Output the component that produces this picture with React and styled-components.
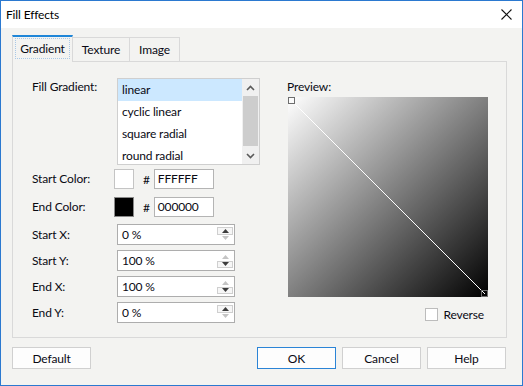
import styled, { createGlobalStyle } from 'styled-components';

const Global = createGlobalStyle`
  html, body { margin: 0; padding: 0; background: #fff; }
  * { box-sizing: border-box; }
  body { font-family: Lato, "Noto Sans", sans-serif; font-size: 12px; letter-spacing: -0.15px; color: #0a0a14; }
`;

const Window = styled.div`
  width: 523px;
  height: 386px;
  border: 1px solid #2b79d0;
  background: #f3f3f1;
  display: flex;
  flex-direction: column;
`;

const TitleBar = styled.div`
  height: 27px;
  background: #fff;
  display: flex;
  align-items: center;
  justify-content: space-between;
  padding-left: 5px;
`;

const Title = styled.span`
  font-size: 12px;
  color: #000;
`;

const CloseBtn = styled.div`
  width: 32px;
  height: 27px;
  display: flex;
  align-items: center;
  justify-content: center;
`;

const Body = styled.div`
  flex: 1;
  padding: 7px 15px 0 11px;
  display: flex;
  flex-direction: column;
`;

const Tabs = styled.div`
  display: flex;
  align-items: flex-end;
  height: 27px;
  margin-bottom: -1px;
  position: relative;
  z-index: 1;
`;

const Tab = styled.div`
  width: ${p => p.$w}px;
  height: ${p => (p.$active ? 27 : 25)}px;
  border: 1px solid #d9d9d9;
  border-left: ${p => (p.$first ? '1px solid #d9d9d9' : 'none')};
  border-top: ${p => (p.$active ? '2px solid #1f86d8' : '1px solid #d9d9d9')};
  border-bottom: ${p => (p.$active ? 'none' : '1px solid #d9d9d9')};
  background: #f3f3f1;
  display: flex;
  align-items: center;
  justify-content: center;
  padding-bottom: ${p => (p.$active ? 2 : 0)}px;
`;

const FocusText = styled.span`
  outline: 1px dotted #a9c8e6;
  outline-offset: 2px;
  padding: 0 2px;
`;

const Panel = styled.div`
  height: 277px;
  border: 1px solid #d9d9d9;
  padding: 16px 0 0 19px;
  display: flex;
  gap: 28px;
`;

const LeftCol = styled.div`
  width: 228px;
  display: flex;
  flex-direction: column;
`;

const Row = styled.div`
  display: flex;
  align-items: ${p => (p.$top ? 'flex-start' : 'center')};
  margin-top: ${p => p.$mt || 0}px;
`;

const Label = styled.div`
  width: ${p => p.$w || 85}px;
  flex-shrink: 0;
  line-height: 18px;
`;

const ListBox = styled.div`
  width: 143px;
  height: 87px;
  border: 1px solid #cfcfcf;
  background: #fff;
  display: flex;
  overflow: hidden;
`;

const Items = styled.div`
  flex: 1;
`;

const Item = styled.div`
  height: 22px;
  line-height: 22px;
  padding-left: 4px;
  background: ${p => (p.$sel ? '#cce8ff' : 'transparent')};
`;

const ScrollBar = styled.div`
  width: 17px;
  background: #f0f0f0;
  display: flex;
  flex-direction: column;
  align-items: center;
`;

const ScrollArrow = styled.div`
  height: 17px;
  width: 100%;
  display: flex;
  align-items: center;
  justify-content: center;
  margin-top: ${p => (p.$bottom ? 'auto' : '0')};
`;

const Thumb = styled.div`
  width: 15px;
  height: 50px;
  background: #cdcdcd;
`;

const Swatch = styled.div`
  width: 20px;
  height: 20px;
  border: 1px solid ${p => (p.$c === '#000' ? '#8a8a8a' : '#c4c4c4')};
  background: ${p => p.$c};
`;

const Hash = styled.span`
  margin: 0 4px 0 9px;
`;

const HexInput = styled.div`
  width: 60px;
  height: 20px;
  border: 1px solid #b4b4b4;
  background: #fff;
  padding-left: 3px;
  line-height: 18px;
`;

const Spinner = styled.div`
  width: 118px;
  height: 21px;
  border: 1px solid #adadad;
  background: #fff;
  display: flex;
  align-items: center;
  justify-content: space-between;
  padding: 0 0 0 4px;
`;

const SpinCol = styled.div`
  width: 17px;
  height: 100%;
  padding: 2px 1px 2px 0;
  display: flex;
  flex-direction: column;
`;

const SpinBtn = styled.div`
  flex: 1;
  border: 1px solid ${p => (p.$on ? '#cfcfcf' : 'transparent')};
  background: ${p => (p.$on ? '#f6f6f6' : 'transparent')};
  display: flex;
  align-items: center;
  justify-content: center;
`;

const RightCol = styled.div`
  display: flex;
  flex-direction: column;
`;

const PreviewLabel = styled.div`
  line-height: 18px;
  margin-left: -1px;
`;

const Preview = styled.div`
  position: relative;
  width: 200px;
  height: 200px;
  margin-top: 1px;
  background: linear-gradient(135deg, #ffffff 0%, #000000 100%);
`;

const Handle = styled.div`
  position: absolute;
  width: 7px;
  height: 7px;
  border: 1px solid #6e6e6e;
  background: transparent;
  ${p => (p.$end ? 'right: 0; bottom: 0;' : 'left: 0; top: 0;')}
`;

const CheckRow = styled.div`
  display: flex;
  align-items: center;
  justify-content: flex-end;
  gap: 5px;
  margin-top: 10px;
  padding-right: 4px;
`;

const Check = styled.div`
  width: 13px;
  height: 13px;
  border: 1px solid #bcbcbc;
  background: #fff;
`;

const Footer = styled.div`
  display: flex;
  gap: 6px;
  margin-top: 9px;
`;

const Button = styled.div`
  width: 79px;
  height: 22px;
  border: 1px solid ${p => (p.$def ? '#2b84d6' : '#d0d0d0')};
  background: #fdfdfd;
  display: flex;
  align-items: center;
  justify-content: center;
  margin-right: ${p => p.$gapAfter || 0}px;
`;

const Up = ({ c = '#5a5a5a' }) => (
  <svg width="9" height="6" viewBox="0 0 9 6"><path d="M1 5 L4.5 1.5 L8 5" fill="none" stroke={c} strokeWidth="1.6" /></svg>
);
const Down = ({ c = '#5a5a5a' }) => (
  <svg width="9" height="6" viewBox="0 0 9 6"><path d="M1 1 L4.5 4.5 L8 1" fill="none" stroke={c} strokeWidth="1.6" /></svg>
);
const Tri = ({ up, on }) => (
  <svg width="7" height="4" viewBox="0 0 7 4">
    <path d={up ? 'M0 4 L3.5 0 L7 4 Z' : 'M0 0 L3.5 4 L7 0 Z'} fill={on ? '#3c3c3c' : '#c4c4c4'} />
  </svg>
);

function Spin({ value, up, down }) {
  return (
    <Spinner>
      <span>{value}</span>
      <SpinCol>
        <SpinBtn $on={up}><Tri up on={up} /></SpinBtn>
        <SpinBtn $on={down}><Tri on={down} /></SpinBtn>
      </SpinCol>
    </Spinner>
  );
}

export default function App() {
  return (
    <Window>
      <Global />
      <TitleBar>
        <Title>Fill Effects</Title>
        <CloseBtn>
          <svg width="11" height="11" viewBox="0 0 11 11">
            <path d="M0.5 0.5 L10.5 10.5 M10.5 0.5 L0.5 10.5" stroke="#111" strokeWidth="1.1" />
          </svg>
        </CloseBtn>
      </TitleBar>
      <Body>
        <Tabs>
          <Tab $active $first $w={61}><FocusText>Gradient</FocusText></Tab>
          <Tab $w={57}>Texture</Tab>
          <Tab $w={50}>Image</Tab>
        </Tabs>
        <Panel>
          <LeftCol>
            <Row $top>
              <Label>Fill Gradient:</Label>
              <ListBox>
                <Items>
                  <Item $sel>linear</Item>
                  <Item>cyclic linear</Item>
                  <Item>square radial</Item>
                  <Item>round radial</Item>
                </Items>
                <ScrollBar>
                  <ScrollArrow><Up /></ScrollArrow>
                  <Thumb />
                  <ScrollArrow $bottom><Down /></ScrollArrow>
                </ScrollBar>
              </ListBox>
            </Row>
            <Row $mt={4}>
              <Label $w={82}>Start Color:</Label>
              <Swatch $c="#fff" />
              <Hash>#</Hash>
              <HexInput>FFFFFF</HexInput>
            </Row>
            <Row $mt={8}>
              <Label $w={82}>End Color:</Label>
              <Swatch $c="#000" />
              <Hash>#</Hash>
              <HexInput>000000</HexInput>
            </Row>
            <Row $mt={7}>
              <Label>Start X:</Label>
              <Spin value="0 %" up />
            </Row>
            <Row $mt={5}>
              <Label>Start Y:</Label>
              <Spin value="100 %" down />
            </Row>
            <Row $mt={5}>
              <Label>End X:</Label>
              <Spin value="100 %" down />
            </Row>
            <Row $mt={5}>
              <Label>End Y:</Label>
              <Spin value="0 %" up />
            </Row>
          </LeftCol>
          <RightCol>
            <PreviewLabel>Preview:</PreviewLabel>
            <Preview>
              <svg width="200" height="200" viewBox="0 0 200 200" style={{ display: 'block' }}>
                <line x1="4" y1="4" x2="197" y2="197" stroke="#fff" strokeWidth="1" />
              </svg>
              <Handle />
              <Handle $end />
            </Preview>
            <CheckRow>
              <Check />
              <span>Reverse</span>
            </CheckRow>
          </RightCol>
        </Panel>
        <Footer>
          <Button $gapAfter={160}>Default</Button>
          <Button $def>OK</Button>
          <Button>Cancel</Button>
          <Button>Help</Button>
        </Footer>
      </Body>
    </Window>
  );
}
